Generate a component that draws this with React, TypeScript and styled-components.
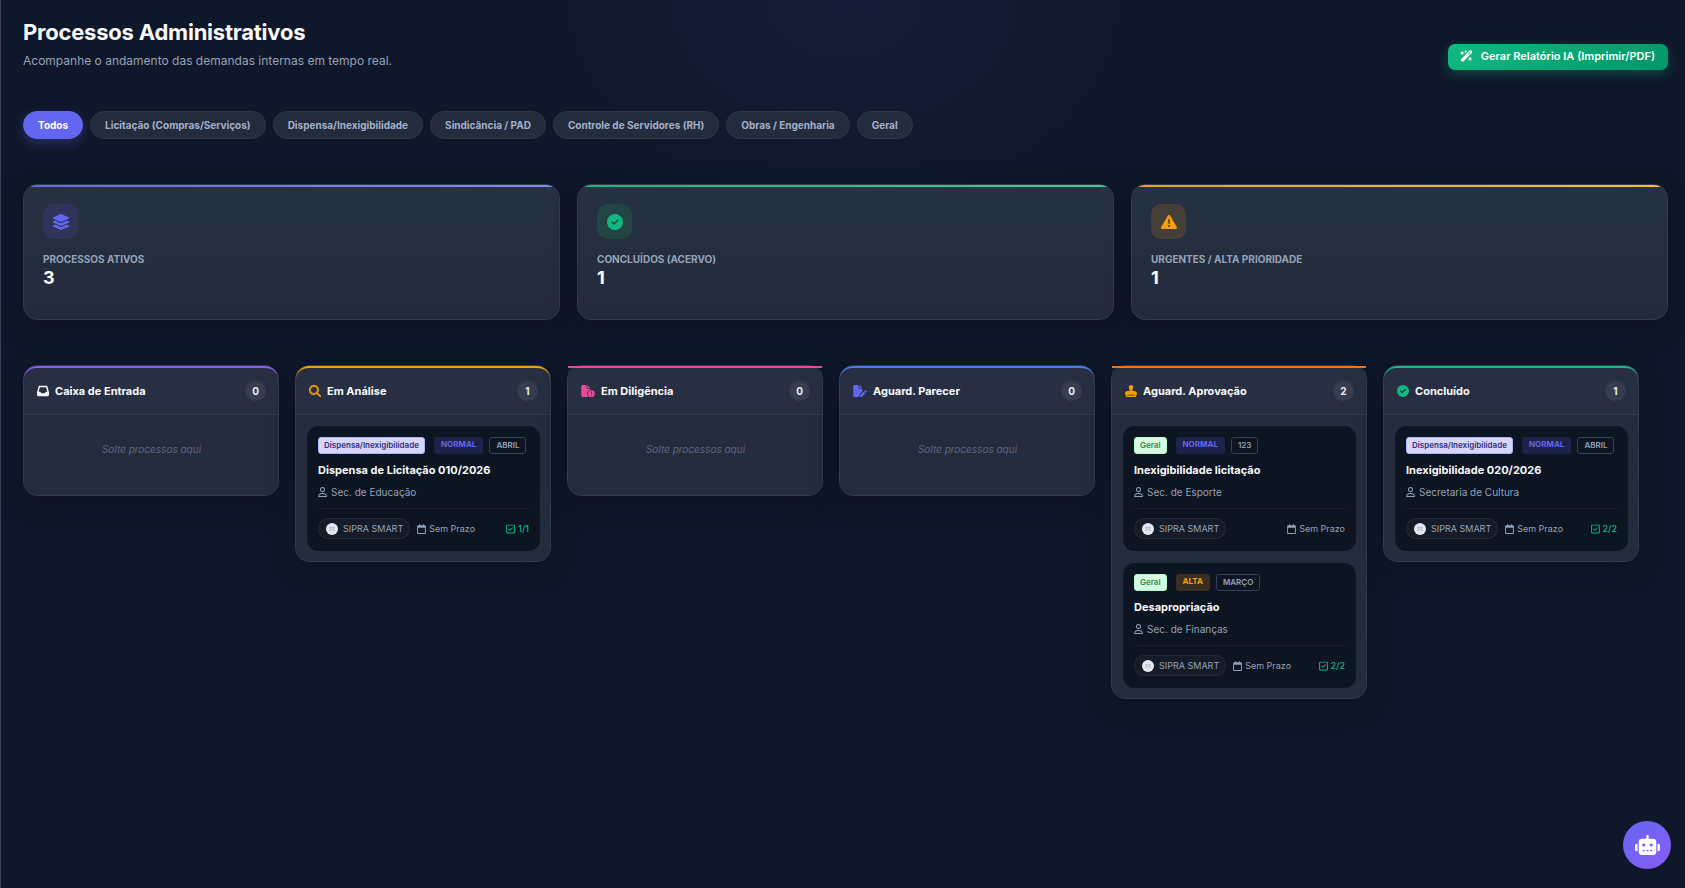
import React from 'react';
import styled, { createGlobalStyle, css } from 'styled-components';
import {
  FaCircleCheck,
  FaFileCircleExclamation,
  FaFilePen,
  FaInbox,
  FaLayerGroup,
  FaMagnifyingGlass,
  FaRegCalendar,
  FaRegSquareCheck,
  FaRegUser,
  FaRobot,
  FaStamp,
  FaTriangleExclamation,
  FaWandMagicSparkles,
} from 'react-icons/fa6';

const GlobalStyle = createGlobalStyle`
  *, *::before, *::after { box-sizing: border-box; }
  body {
    margin: 0;
    background: #0f172a;
    color: #f8fafc;
    font-family: Inter, 'Liberation Sans', sans-serif;
    font-size: 11px;
  }
  button { font-family: inherit; cursor: pointer; }
  h1, h2, h3, p, ul { margin: 0; padding: 0; }
  ul { list-style: none; }
  svg { display: block; flex: none; }
`;

const Page = styled.main`
  min-height: 100vh;
  padding: 18px 17px 24px 22px;
  border-left: 1px solid #334155;
  background: radial-gradient(ellipse 330px 240px at 50% 0, rgba(99, 102, 241, 0.07), transparent) no-repeat;
`;

const PageHeader = styled.header`
  display: flex;
  align-items: flex-end;
  justify-content: space-between;
  gap: 16px;
`;

const PageTitle = styled.h1`
  font-size: 22px;
  line-height: 28px;
  font-weight: 700;
  letter-spacing: -0.01em;
`;

const PageSubtitle = styled.p`
  margin-top: 6px;
  font-size: 12px;
  line-height: 18px;
  color: #94a3b8;
`;

const ReportButton = styled.button`
  display: flex;
  align-items: center;
  gap: 8px;
  height: 26px;
  padding: 0 13px 2px 12px;
  border: 0;
  border-radius: 7px;
  background: linear-gradient(135deg, #10b981, #059669);
  box-shadow: 0 4px 12px rgba(16, 185, 129, 0.3);
  color: #fff;
  font-size: 11px;
  font-weight: 600;
  svg {
    width: 13px;
    height: 12px;
  }
`;

const Filters = styled.nav`
  display: flex;
  flex-wrap: wrap;
  gap: 7px;
  margin-top: 41px;
`;

const FilterPill = styled.button<{ $active?: boolean }>`
  height: 28px;
  padding: 0 14px;
  border: 1px solid #2e3747;
  border-radius: 14px;
  background: #232c3d;
  color: #a3b0c9;
  font-size: 10px;
  font-weight: 700;
  ${(p) =>
    p.$active &&
    css`
      border-color: #6366f1;
      background: #6366f1;
      box-shadow: 0 4px 12px rgba(99, 102, 241, 0.3);
      color: #fff;
    `}
`;

const Stats = styled.section`
  display: grid;
  grid-template-columns: repeat(3, 1fr);
  gap: 17px;
  margin-top: 45px;
`;

const StatCard = styled.article<{ $from: string; $to: string }>`
  position: relative;
  overflow: hidden;
  min-height: 136px;
  padding: 19px;
  border: 1px solid #323c4d;
  border-radius: 14px;
  background: linear-gradient(#263241, #232d3e 60%, #242a3d) padding-box;
  box-shadow: 0 8px 28px rgba(10, 10, 28, 0.3);
  &::before {
    content: '';
    position: absolute;
    inset: 0 0 auto;
    height: 2px;
    background: linear-gradient(90deg, ${(p) => p.$from}, ${(p) => p.$to});
  }
`;

const StatIcon = styled.div<{ $color: string; $bg: string }>`
  display: flex;
  align-items: center;
  justify-content: center;
  width: 35px;
  height: 35px;
  border-radius: 10px;
  background: ${(p) => p.$bg};
  color: ${(p) => p.$color};
  svg {
    width: 18px;
    height: 16px;
  }
`;

const StatLabel = styled.h2`
  margin-top: 13px;
  font-size: 10px;
  line-height: 15px;
  font-weight: 700;
  text-transform: uppercase;
  color: #94a3b8;
`;

const StatValue = styled.p`
  font-size: 18px;
  line-height: 22px;
  font-weight: 700;
`;

const Board = styled.section`
  display: flex;
  align-items: flex-start;
  gap: 16px;
  margin-top: 45px;
`;

const Column = styled.section`
  flex: 0 0 256px;
  border: 1px solid #303b4b;
  border-radius: 14px;
  background: linear-gradient(#222d3c, #242b3d 50%, #222d3b) padding-box;
  box-shadow: 0 8px 28px rgba(10, 10, 28, 0.3);
`;

const ColumnHeader = styled.header<{ $accent: string; $square?: boolean }>`
  display: flex;
  align-items: center;
  justify-content: space-between;
  padding: 13px 12px 13px 13px;
  border-top: 2px solid ${(p) => p.$accent};
  border-bottom: 1px solid #303b4b;
  border-radius: ${(p) => (p.$square ? '0' : '13px 13px 0 0')};
  background: ${(p) =>
    p.$square
      ? 'radial-gradient(ellipse at 50% 100%, #282f42 92%, transparent) padding-box'
      : '#282f42'};
`;

const ColumnTitle = styled.h2<{ $icon: string; $wide?: boolean }>`
  display: flex;
  align-items: center;
  gap: 6px;
  font-size: 11px;
  line-height: 20px;
  font-weight: 700;
  svg {
    width: ${(p) => (p.$wide ? 14 : 12)}px;
    height: 12px;
    color: ${(p) => p.$icon};
  }
`;

const Count = styled.span`
  min-width: 21px;
  height: 20px;
  border-radius: 10px;
  background: #363d4e;
  color: #e8edf5;
  font-size: 10px;
  line-height: 20px;
  font-weight: 700;
  text-align: center;
`;

const ColumnBody = styled.ul`
  display: flex;
  flex-direction: column;
  gap: 12px;
  padding: 11px 10px 10px 11px;
`;

const Empty = styled.li`
  padding: 11px 0 24px;
  color: #5b6980;
  font-size: 10px;
  line-height: 24px;
  font-style: italic;
  text-align: center;
`;

const Card = styled.li`
  padding: 10px 10px 11px;
  border: 1px solid #101725;
  border-radius: 11px;
  background: #0d1422;
`;

const Tags = styled.div`
  display: flex;
  gap: 6px;
`;

const Tag = styled.span`
  height: 17px;
  padding: 0 6px;
  border-radius: 3px;
  font-size: 8px;
  line-height: 15px;
  font-weight: 600;
  white-space: nowrap;
`;

const CategoryTag = styled(Tag)<{ $general?: boolean }>`
  margin-right: 3px;
  padding: 0 5px;
  border: 1px solid ${(p) => (p.$general ? '#bbf7d0' : '#a5b4fc')};
  background: ${(p) => (p.$general ? '#d6fae0' : '#d5d6f8')};
  color: ${(p) => (p.$general ? '#2f8a4e' : '#312e81')};
`;

const PriorityTag = styled(Tag)<{ $high?: boolean }>`
  padding: 0 7px;
  background: ${(p) => (p.$high ? '#3b2d1f' : '#1d2248')};
  color: ${(p) => (p.$high ? '#f59e0b' : '#6366f1')};
  font-weight: 700;
`;

const PeriodTag = styled(Tag)`
  border: 1px solid #334155;
  color: #94a3b8;
`;

const CardTitle = styled.h3`
  margin-top: 7px;
  font-size: 11px;
  line-height: 18px;
  font-weight: 700;
`;

const Sector = styled.p`
  display: flex;
  align-items: center;
  gap: 4px;
  margin-top: 6px;
  padding-bottom: 9px;
  border-bottom: 1px solid rgba(255, 255, 255, 0.06);
  color: #94a3b8;
  font-size: 10px;
  line-height: 14px;
  svg {
    width: 9px;
    height: 10px;
  }
`;

const CardFooter = styled.footer`
  display: flex;
  align-items: center;
  justify-content: space-between;
  margin-top: 9px;
  color: #94a3b8;
  font-size: 9px;
  line-height: 12px;
`;

const Owner = styled.span`
  display: flex;
  align-items: center;
  gap: 5px;
  height: 21px;
  padding: 0 6px 0 7px;
  border: 1px solid rgba(255, 255, 255, 0.07);
  border-radius: 11px;
  background: #151b29;
`;

const Meta = styled.span`
  display: flex;
  align-items: center;
  gap: 3px;
  svg {
    width: 9px;
    height: 10px;
  }
`;

const Deadline = styled(Meta)<{ $spaced?: boolean }>`
  margin-right: ${(p) => (p.$spaced ? 'auto' : '0')};
  margin-left: 7px;
`;

const Progress = styled(Meta)`
  color: #10b981;
  font-weight: 500;
`;

const AssistantButton = styled.button`
  position: fixed;
  right: 14px;
  bottom: 19px;
  display: flex;
  align-items: center;
  justify-content: center;
  width: 48px;
  height: 48px;
  padding: 0;
  border: 0;
  border-radius: 50%;
  background: linear-gradient(135deg, #6366f1, #8b5cf6);
  color: #fff;
  svg {
    width: 25px;
    height: 20px;
  }
`;

const AvatarImage = styled.svg`
  width: 12px;
  height: 12px;
`;

const Avatar = () => (
  <AvatarImage viewBox="0 0 12 12" aria-hidden="true">
    <circle cx="6" cy="6" r="6" fill="#e2e8f0" />
    <path
      d="M5.6 4.5H3.6l1 1.4-1 1.3h2M8.6 4.5H6.6l1 1.4-1 1.3h2"
      fill="none"
      stroke="#8f98a8"
      strokeWidth="0.6"
    />
  </AvatarImage>
);

const filters = [
  'Todos',
  'Licitação (Compras/Serviços)',
  'Dispensa/Inexigibilidade',
  'Sindicância / PAD',
  'Controle de Servidores (RH)',
  'Obras / Engenharia',
  'Geral',
];

const stats = [
  { label: 'Processos Ativos', value: 3, icon: <FaLayerGroup />, color: '#6366f1', bg: '#2f355a', from: '#6366f1', to: '#818cf8' },
  { label: 'Concluídos (Acervo)', value: 1, icon: <FaCircleCheck />, color: '#10b981', bg: '#234444', from: '#10b981', to: '#34d399' },
  { label: 'Urgentes / Alta Prioridade', value: 1, icon: <FaTriangleExclamation />, color: '#f59e0b', bg: '#463f37', from: '#f59e0b', to: '#fbbf24' },
];

interface Process {
  category: string;
  high?: boolean;
  period: string;
  title: string;
  sector: string;
  progress?: string;
}

interface Stage {
  name: string;
  icon: React.ReactNode;
  iconColor: string;
  wideIcon?: boolean;
  accent: string;
  square?: boolean;
  items: Process[];
}

const stages: Stage[] = [
  { name: 'Caixa de Entrada', icon: <FaInbox />, iconColor: '#f8fafc', accent: '#8b5cf6', items: [] },
  {
    name: 'Em Análise',
    icon: <FaMagnifyingGlass stroke="currentColor" strokeWidth={20} />,
    iconColor: '#f59e0b',
    accent: '#f59e0b',
    items: [
      { category: 'Dispensa/Inexigibilidade', period: 'ABRIL', title: 'Dispensa de Licitação 010/2026', sector: 'Sec. de Educação', progress: '1/1' },
    ],
  },
  { name: 'Em Diligência', icon: <FaFileCircleExclamation />, iconColor: '#ec4899', wideIcon: true, accent: '#ec4899', square: true, items: [] },
  { name: 'Aguard. Parecer', icon: <FaFilePen />, iconColor: '#6366f1', wideIcon: true, accent: '#3b82f6', items: [] },
  {
    name: 'Aguard. Aprovação',
    icon: <FaStamp />,
    iconColor: '#f59e0b',
    accent: '#f97316',
    square: true,
    items: [
      { category: 'Geral', period: '123', title: 'Inexigibilidade licitação', sector: 'Sec. de Esporte' },
      { category: 'Geral', high: true, period: 'MARÇO', title: 'Desapropriação', sector: 'Sec. de Finanças', progress: '2/2' },
    ],
  },
  {
    name: 'Concluído',
    icon: <FaCircleCheck />,
    iconColor: '#10b981',
    accent: '#10b981',
    items: [
      { category: 'Dispensa/Inexigibilidade', period: 'ABRIL', title: 'Inexigibilidade 020/2026', sector: 'Secretaria de Cultura', progress: '2/2' },
    ],
  },
];

const ProcessCard = ({ item }: { item: Process }) => (
  <Card>
    <Tags>
      <CategoryTag $general={item.category === 'Geral'}>{item.category}</CategoryTag>
      <PriorityTag $high={item.high}>{item.high ? 'ALTA' : 'NORMAL'}</PriorityTag>
      <PeriodTag>{item.period}</PeriodTag>
    </Tags>
    <CardTitle>{item.title}</CardTitle>
    <Sector>
      <FaRegUser />
      {item.sector}
    </Sector>
    <CardFooter>
      <Owner>
        <Avatar />
        SIPRA SMART
      </Owner>
      <Deadline $spaced={!!item.progress}>
        <FaRegCalendar />
        Sem Prazo
      </Deadline>
      {item.progress && (
        <Progress>
          <FaRegSquareCheck />
          {item.progress}
        </Progress>
      )}
    </CardFooter>
  </Card>
);

export default function App() {
  return (
    <>
      <GlobalStyle />
      <Page>
        <PageHeader>
          <div>
            <PageTitle>Processos Administrativos</PageTitle>
            <PageSubtitle>Acompanhe o andamento das demandas internas em tempo real.</PageSubtitle>
          </div>
          <ReportButton type="button">
            <FaWandMagicSparkles />
            Gerar Relatório IA (Imprimir/PDF)
          </ReportButton>
        </PageHeader>
        <Filters aria-label="Categorias">
          {filters.map((name, i) => (
            <FilterPill key={name} type="button" $active={i === 0}>
              {name}
            </FilterPill>
          ))}
        </Filters>
        <Stats>
          {stats.map((s) => (
            <StatCard key={s.label} $from={s.from} $to={s.to}>
              <StatIcon $color={s.color} $bg={s.bg}>
                {s.icon}
              </StatIcon>
              <StatLabel>{s.label}</StatLabel>
              <StatValue>{s.value}</StatValue>
            </StatCard>
          ))}
        </Stats>
        <Board>
          {stages.map((stage) => (
            <Column key={stage.name}>
              <ColumnHeader $accent={stage.accent} $square={stage.square}>
                <ColumnTitle $icon={stage.iconColor} $wide={stage.wideIcon}>
                  {stage.icon}
                  {stage.name}
                </ColumnTitle>
                <Count>{stage.items.length}</Count>
              </ColumnHeader>
              <ColumnBody>
                {stage.items.length === 0 && <Empty>Solte processos aqui</Empty>}
                {stage.items.map((item) => (
                  <ProcessCard key={item.title} item={item} />
                ))}
              </ColumnBody>
            </Column>
          ))}
        </Board>
      </Page>
      <AssistantButton type="button" aria-label="Assistente IA">
        <FaRobot />
      </AssistantButton>
    </>
  );
}
